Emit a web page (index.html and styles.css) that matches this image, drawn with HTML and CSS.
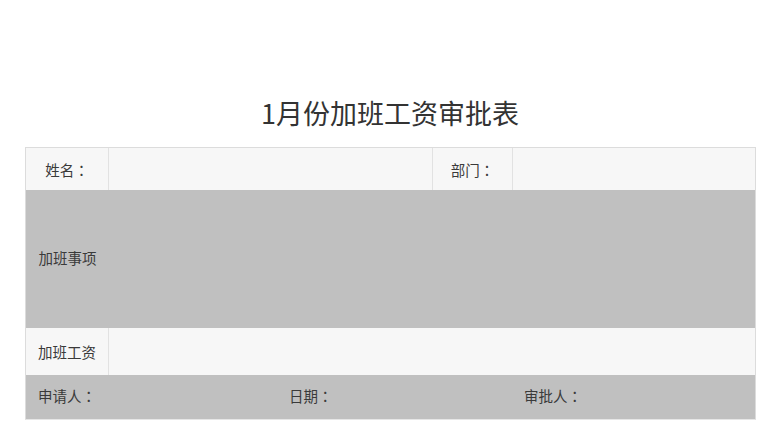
FILE: index.html
```html
<!DOCTYPE html>
<html>
<head>
    <meta charset='utf-8'>
    <title>加班工资审批表</title>
    <link rel="stylesheet" href="styles.css">
</head>
<body>
    <h1 class="title">1月份加班工资审批表</h1>
    <div class="sheet">
        <div class="cell label">姓名<span class="colon">：</span></div>
        <div class="cell"></div>
        <div class="cell label">部门<span class="colon">：</span></div>
        <div class="cell last"></div>

        <div class="cell label grey tall">加班事项</div>
        <div class="cell grey tall span3"></div>

        <div class="cell label mid">加班工资</div>
        <div class="cell mid span3 last"></div>

        <div class="footrow">
            <span class="f1">申请人<span class="colon">：</span></span>
            <span class="f2">日期<span class="colon">：</span></span>
            <span class="f3">审批人<span class="colon">：</span></span>
        </div>
    </div>
</body>
</html>
```

FILE: styles.css
```css
body {
    margin: 0;
    font-family: "Noto Sans CJK SC", "Liberation Sans", sans-serif;
    color: #3a3a3a;
    background: #fff;
}
.title {
    margin: 0;
    padding-top: 95px;
    height: 52px;
    font-size: 27px;
    font-weight: normal;
    line-height: 36px;
    text-align: center;
    color: #333;
}
.sheet {
    margin-left: 25px;
    width: 731px;
    border: 1px solid #dcdcdc;
    border-bottom-color: #e6e6e6;
    box-sizing: border-box;
    display: grid;
    grid-template-columns: 83px 324px 80px 1fr;
    grid-template-rows: 42px 138px 47px 44px;
    font-size: 14.5px;
}
.colon {
    font-family: "Noto Sans CJK JP", sans-serif;
}
.cell {
    background: #f7f7f7;
    border-right: 1px solid #e2e2e2;
    display: flex;
    align-items: center;
}
.cell.last {
    border-right: none;
}
.label {
    justify-content: center;
}
.grey {
    background: #c0c0c0;
    border-right: none;
}
.tall {
    padding-bottom: 4px;
}
.span3 {
    grid-column: span 3;
}
.footrow {
    grid-column: span 4;
    background: #c0c0c0;
    display: flex;
    align-items: center;
    padding-left: 12px;
    padding-bottom: 3px;
}
.f1 {
    width: 251px;
}
.f2 {
    width: 235px;
}
```
